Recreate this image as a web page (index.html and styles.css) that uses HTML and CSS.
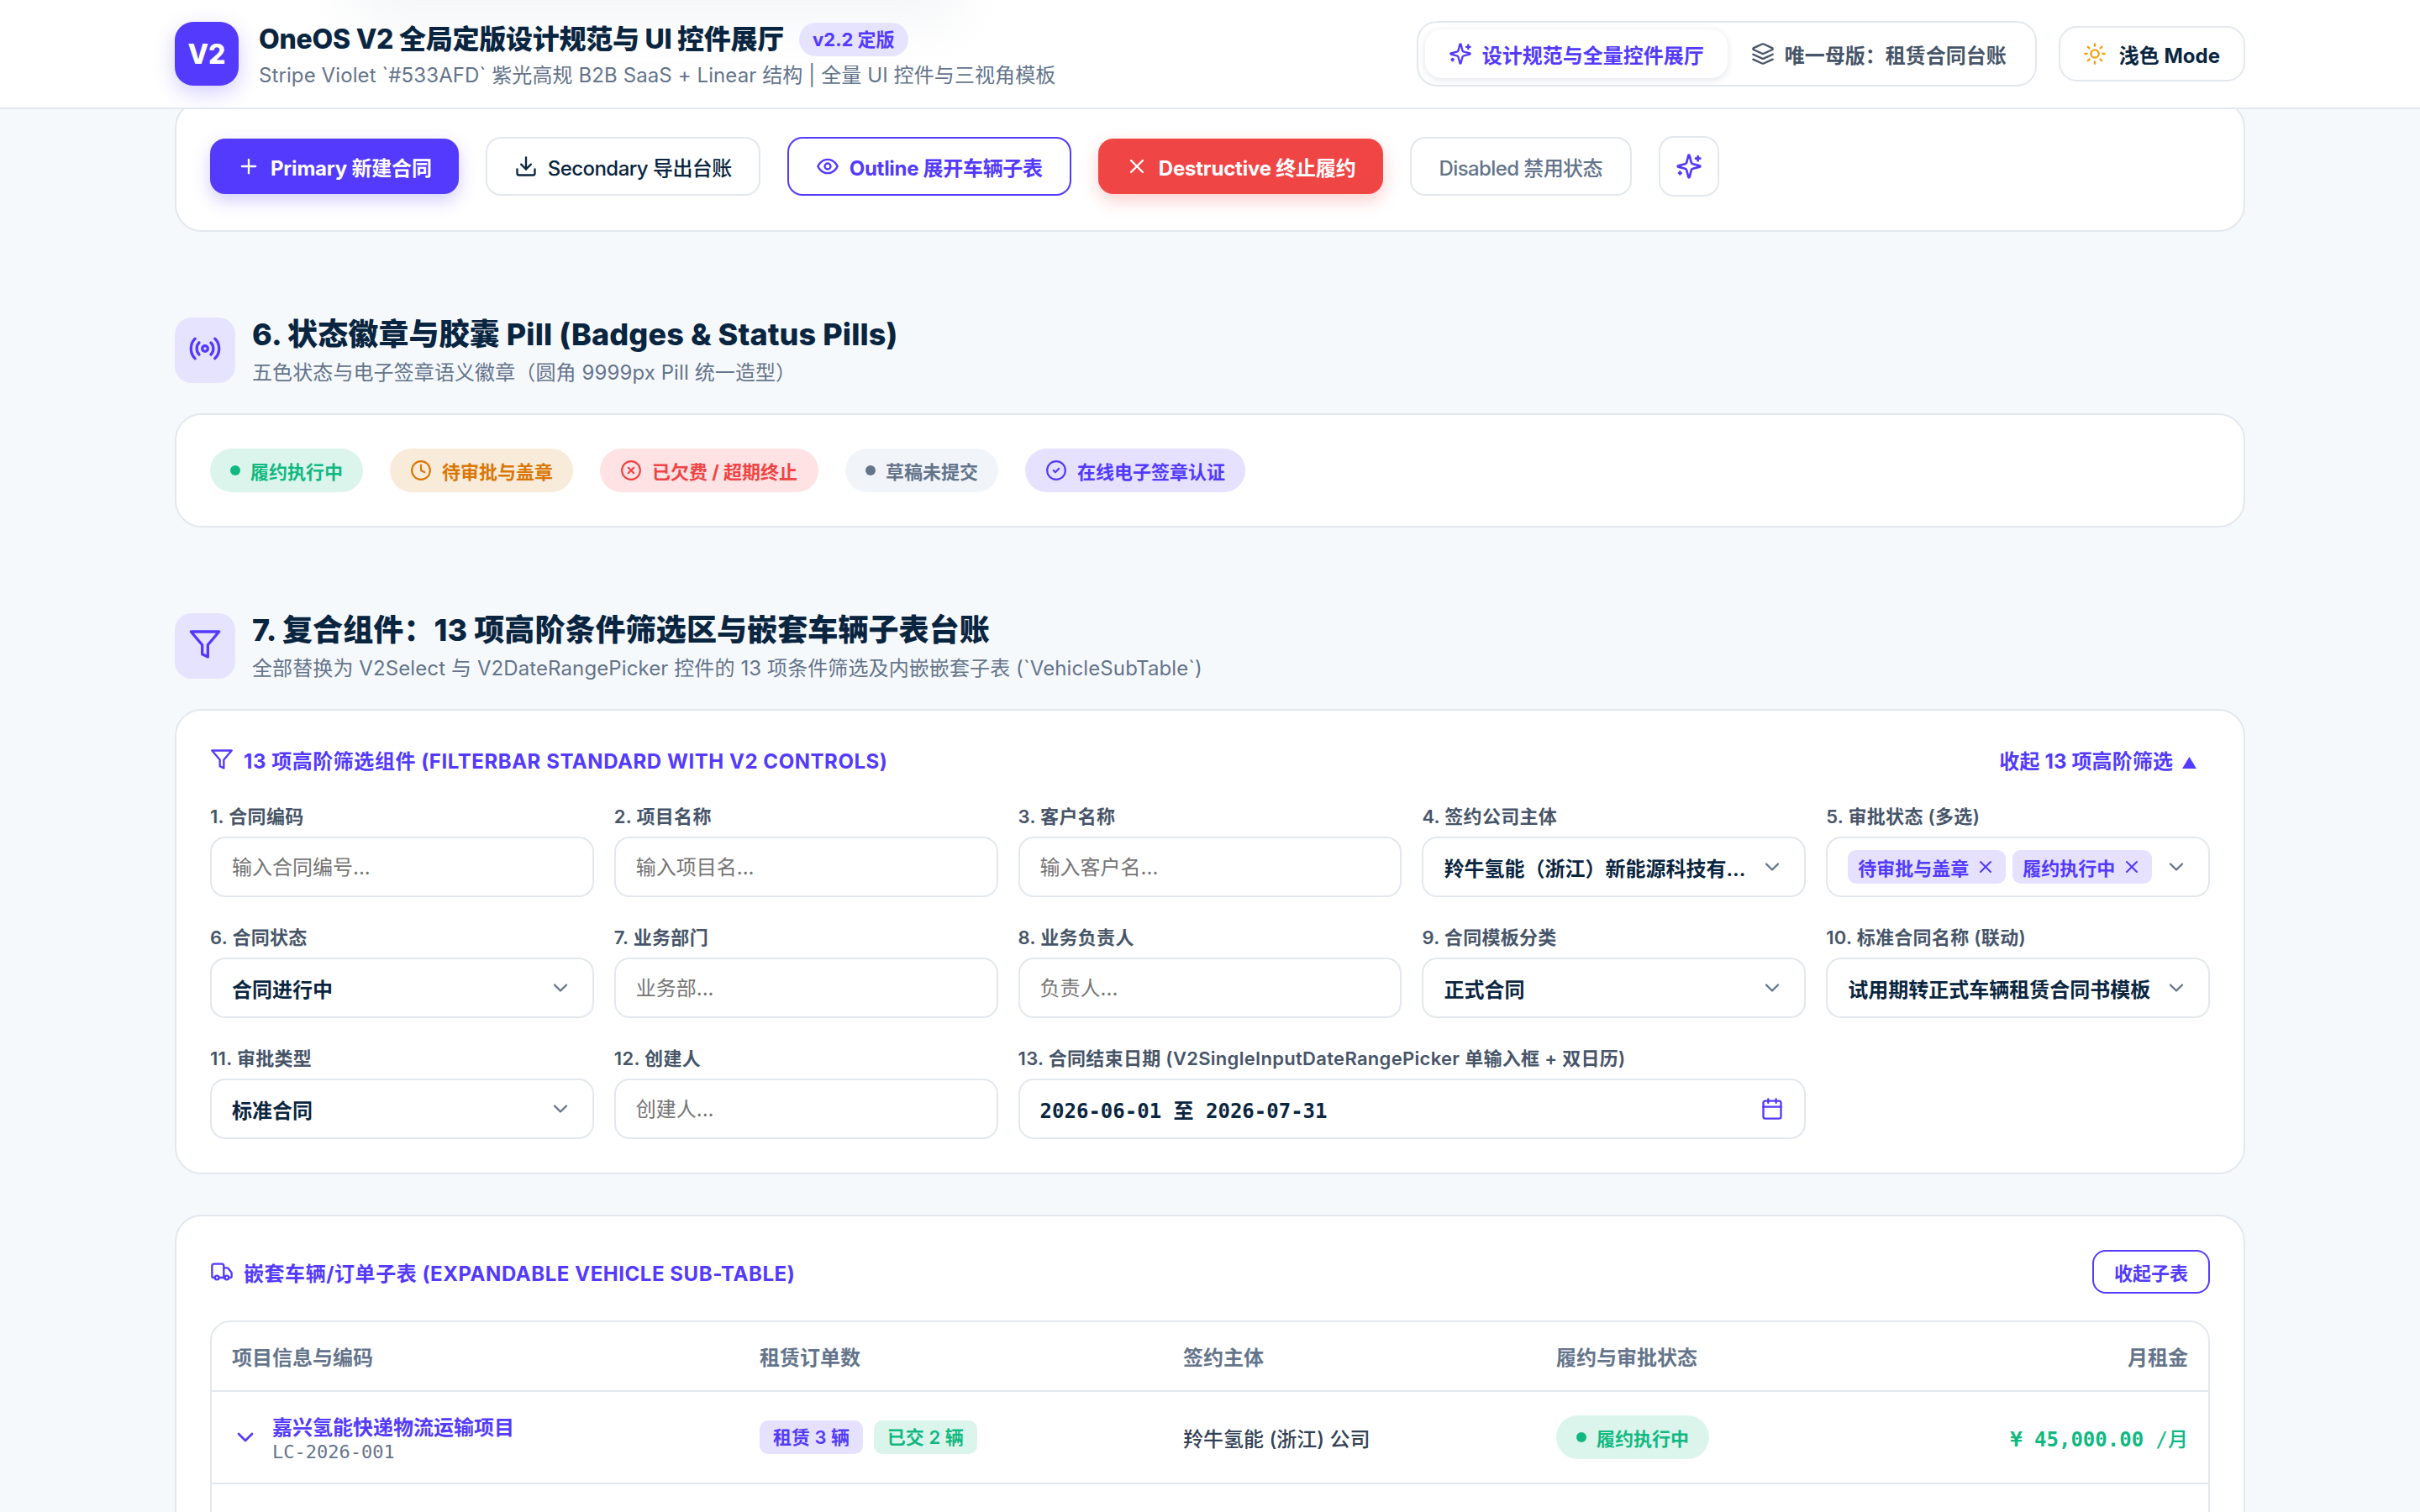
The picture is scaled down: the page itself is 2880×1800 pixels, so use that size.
FILE: index.html
```html
<!DOCTYPE html>
<html lang="zh-CN">
<head>
    <meta charset="UTF-8">
    <meta name="viewport" content="width=device-width, initial-scale=1.0">
    <title>OneOS V2 全局定版设计规范与 UI 控件展厅</title>
    <link rel="stylesheet" href="styles.css">
</head>
<body>
    <!-- Lucide style icon set, reused through <use> -->
    <svg class="icon-defs" xmlns="http://www.w3.org/2000/svg">
        <symbol id="i-sparkles" viewBox="0 0 24 24"><path d="M9.937 15.5A2 2 0 0 0 8.5 14.063l-6.135-1.582a.5.5 0 0 1 0-.962L8.5 9.936A2 2 0 0 0 9.937 8.5l1.582-6.135a.5.5 0 0 1 .963 0L14.063 8.5A2 2 0 0 0 15.5 9.937l6.135 1.581a.5.5 0 0 1 0 .964L15.5 14.063a2 2 0 0 0-1.437 1.437l-1.582 6.135a.5.5 0 0 1-.963 0z"/><path d="M20 3v4"/><path d="M22 5h-4"/><path d="M4 17v2"/><path d="M5 18H3"/></symbol>
        <symbol id="i-layers" viewBox="0 0 24 24"><path d="m12.83 2.18a2 2 0 0 0-1.66 0L2.6 6.08a1 1 0 0 0 0 1.83l8.58 3.91a2 2 0 0 0 1.66 0l8.58-3.9a1 1 0 0 0 0-1.83Z"/><path d="m22 17.65-9.17 4.16a2 2 0 0 1-1.66 0L2 17.65"/><path d="m22 12.65-9.17 4.16a2 2 0 0 1-1.66 0L2 12.65"/></symbol>
        <symbol id="i-sun" viewBox="0 0 24 24"><circle cx="12" cy="12" r="4"/><path d="M12 2v2"/><path d="M12 20v2"/><path d="m4.93 4.93 1.41 1.41"/><path d="m17.66 17.66 1.41 1.41"/><path d="M2 12h2"/><path d="M20 12h2"/><path d="m6.34 17.66-1.41 1.41"/><path d="m19.07 4.93-1.41 1.41"/></symbol>
        <symbol id="i-plus" viewBox="0 0 24 24"><path d="M5 12h14"/><path d="M12 5v14"/></symbol>
        <symbol id="i-download" viewBox="0 0 24 24"><path d="M21 15v4a2 2 0 0 1-2 2H5a2 2 0 0 1-2-2v-4"/><polyline points="7 10 12 15 17 10"/><line x1="12" y1="15" x2="12" y2="3"/></symbol>
        <symbol id="i-eye" viewBox="0 0 24 24"><path d="M2 12s3-7 10-7 10 7 10 7-3 7-10 7-10-7-10-7Z"/><circle cx="12" cy="12" r="3"/></symbol>
        <symbol id="i-x" viewBox="0 0 24 24"><path d="M18 6 6 18"/><path d="m6 6 12 12"/></symbol>
        <symbol id="i-radio" viewBox="0 0 24 24"><path d="M4.9 19.1C1 15.2 1 8.8 4.9 4.9"/><path d="M7.8 16.2c-2.3-2.3-2.3-6.1 0-8.5"/><circle cx="12" cy="12" r="2"/><path d="M16.2 7.8c2.3 2.3 2.3 6.1 0 8.5"/><path d="M19.1 4.9C23 8.8 23 15.1 19.1 19"/></symbol>
        <symbol id="i-clock" viewBox="0 0 24 24"><circle cx="12" cy="12" r="10"/><polyline points="12 6 12 12 16 14"/></symbol>
        <symbol id="i-circle-x" viewBox="0 0 24 24"><circle cx="12" cy="12" r="10"/><path d="m15 9-6 6"/><path d="m9 9 6 6"/></symbol>
        <symbol id="i-circle-check" viewBox="0 0 24 24"><circle cx="12" cy="12" r="10"/><path d="m9 12 2 2 4-4"/></symbol>
        <symbol id="i-filter" viewBox="0 0 24 24"><polygon points="22 3 2 3 10 12.46 10 19 14 21 14 12.46 22 3"/></symbol>
        <symbol id="i-chevron" viewBox="0 0 24 24"><path d="m6 9 6 6 6-6"/></symbol>
        <symbol id="i-calendar" viewBox="0 0 24 24"><rect x="3" y="4" width="18" height="18" rx="2"/><line x1="16" y1="2" x2="16" y2="6"/><line x1="8" y1="2" x2="8" y2="6"/><line x1="3" y1="10" x2="21" y2="10"/></symbol>
        <symbol id="i-truck" viewBox="0 0 24 24"><path d="M14 18V6a2 2 0 0 0-2-2H4a2 2 0 0 0-2 2v11a1 1 0 0 0 1 1h2"/><path d="M15 18H9"/><path d="M19 18h2a1 1 0 0 0 1-1v-3.65a1 1 0 0 0-.22-.624l-3.48-4.35A1 1 0 0 0 17.52 8H14"/><circle cx="17" cy="18" r="2"/><circle cx="7" cy="18" r="2"/></symbol>
    </svg>

    <header class="topbar">
        <div class="topbar-haze"></div>
        <div class="topbar-inner">
            <div class="brand">
                <div class="brand-logo">V2</div>
                <div class="brand-text">
                    <div class="brand-title-row">
                        <h1 class="brand-title">OneOS V2 全局定版设计规范与 UI 控件展厅</h1>
                        <span class="brand-version">v2.2 定版</span>
                    </div>
                    <p class="brand-sub">Stripe Violet `#533AFD` 紫光高规 B2B SaaS + Linear 结构 | 全量 UI 控件与三视角模板</p>
                </div>
            </div>
            <div class="topbar-actions">
                <nav class="tabs">
                    <a class="tab tab-active"><svg class="icon"><use href="#i-sparkles"/></svg>设计规范与全量控件展厅</a>
                    <a class="tab"><svg class="icon"><use href="#i-layers"/></svg>唯一母版：租赁合同台账</a>
                </nav>
                <button class="mode-btn"><svg class="icon icon-sun"><use href="#i-sun"/></svg>浅色 Mode</button>
            </div>
        </div>
    </header>

    <main class="page">
        <section class="section section-cut">
            <div class="card button-row">
                <button class="btn btn-primary"><svg class="icon"><use href="#i-plus"/></svg>Primary 新建合同</button>
                <button class="btn btn-secondary"><svg class="icon"><use href="#i-download"/></svg>Secondary 导出台账</button>
                <button class="btn btn-outline"><svg class="icon"><use href="#i-eye"/></svg>Outline 展开车辆子表</button>
                <button class="btn btn-danger"><svg class="icon"><use href="#i-x"/></svg>Destructive 终止履约</button>
                <button class="btn btn-disabled">Disabled 禁用状态</button>
                <button class="btn btn-icon"><svg class="icon"><use href="#i-sparkles"/></svg></button>
            </div>
        </section>

        <section class="section">
            <div class="section-head">
                <div class="section-icon"><svg class="icon"><use href="#i-radio"/></svg></div>
                <div>
                    <h2 class="section-title">6. 状态徽章与胶囊 Pill (Badges &amp; Status Pills)</h2>
                    <p class="section-sub">五色状态与电子签章语义徽章（圆角 9999px Pill 统一造型）</p>
                </div>
            </div>
            <div class="card pill-row">
                <span class="pill pill-green"><i class="pill-dot"></i>履约执行中</span>
                <span class="pill pill-amber"><svg class="icon"><use href="#i-clock"/></svg>待审批与盖章</span>
                <span class="pill pill-red"><svg class="icon"><use href="#i-circle-x"/></svg>已欠费 / 超期终止</span>
                <span class="pill pill-grey"><i class="pill-dot"></i>草稿未提交</span>
                <span class="pill pill-violet"><svg class="icon"><use href="#i-circle-check"/></svg>在线电子签章认证</span>
            </div>
        </section>

        <section class="section">
            <div class="section-head">
                <div class="section-icon"><svg class="icon"><use href="#i-filter"/></svg></div>
                <div>
                    <h2 class="section-title">7. 复合组件：13 项高阶条件筛选区与嵌套车辆子表台账</h2>
                    <p class="section-sub">全部替换为 V2Select 与 V2DateRangePicker 控件的 13 项条件筛选及内嵌嵌套子表 (`VehicleSubTable`)</p>
                </div>
            </div>

            <div class="card filter-card">
                <div class="filter-head">
                    <div class="panel-title"><svg class="icon"><use href="#i-filter"/></svg>13 项高阶筛选组件 (FILTERBAR STANDARD WITH V2 CONTROLS)</div>
                    <a class="filter-toggle">收起 13 项高阶筛选 <span class="toggle-arrow">▲</span></a>
                </div>
                <div class="filter-grid">
                    <label class="field"><span class="field-label">1. 合同编码</span><input class="control" placeholder="输入合同编号..."></label>
                    <label class="field"><span class="field-label">2. 项目名称</span><input class="control" placeholder="输入项目名..."></label>
                    <label class="field"><span class="field-label">3. 客户名称</span><input class="control" placeholder="输入客户名..."></label>
                    <div class="field"><span class="field-label">4. 签约公司主体</span>
                        <div class="control control-select"><span class="select-value">羚牛氢能（浙江）新能源科技有...</span><svg class="icon chevron"><use href="#i-chevron"/></svg></div>
                    </div>
                    <div class="field"><span class="field-label">5. 审批状态 (多选)</span>
                        <div class="control control-select control-tags">
                            <div class="tag-list">
                                <span class="tag">待审批与盖章<svg class="icon"><use href="#i-x"/></svg></span>
                                <span class="tag">履约执行中<svg class="icon"><use href="#i-x"/></svg></span>
                            </div>
                            <svg class="icon chevron"><use href="#i-chevron"/></svg>
                        </div>
                    </div>

                    <div class="field"><span class="field-label">6. 合同状态</span>
                        <div class="control control-select"><span class="select-value">合同进行中</span><svg class="icon chevron"><use href="#i-chevron"/></svg></div>
                    </div>
                    <label class="field"><span class="field-label">7. 业务部门</span><input class="control" placeholder="业务部..."></label>
                    <label class="field"><span class="field-label">8. 业务负责人</span><input class="control" placeholder="负责人..."></label>
                    <div class="field"><span class="field-label">9. 合同模板分类</span>
                        <div class="control control-select"><span class="select-value">正式合同</span><svg class="icon chevron"><use href="#i-chevron"/></svg></div>
                    </div>
                    <div class="field"><span class="field-label">10. 标准合同名称 (联动)</span>
                        <div class="control control-select"><span class="select-value">试用期转正式车辆租赁合同书模板</span><svg class="icon chevron"><use href="#i-chevron"/></svg></div>
                    </div>

                    <div class="field"><span class="field-label">11. 审批类型</span>
                        <div class="control control-select"><span class="select-value">标准合同</span><svg class="icon chevron"><use href="#i-chevron"/></svg></div>
                    </div>
                    <label class="field"><span class="field-label">12. 创建人</span><input class="control" placeholder="创建人..."></label>
                    <div class="field field-wide"><span class="field-label">13. 合同结束日期 (V2SingleInputDateRangePicker 单输入框 + 双日历)</span>
                        <div class="control control-select"><span class="date-value">2026-06-01 至 2026-07-31</span><svg class="icon calendar"><use href="#i-calendar"/></svg></div>
                    </div>
                </div>
            </div>

            <div class="card vehicle-card">
                <div class="vehicle-head">
                    <div class="panel-title"><svg class="icon"><use href="#i-truck"/></svg>嵌套车辆/订单子表 (EXPANDABLE VEHICLE SUB-TABLE)</div>
                    <button class="btn-small">收起子表</button>
                </div>
                <div class="table-wrap">
                    <table class="vehicle-table">
                        <colgroup>
                            <col class="col-project"><col class="col-orders"><col class="col-entity"><col class="col-status"><col>
                        </colgroup>
                        <thead>
                            <tr>
                                <th>项目信息与编码</th>
                                <th>租赁订单数</th>
                                <th>签约主体</th>
                                <th>履约与审批状态</th>
                                <th class="align-right">月租金</th>
                            </tr>
                        </thead>
                        <tbody>
                            <tr>
                                <td>
                                    <div class="project-cell">
                                        <svg class="icon chevron-row"><use href="#i-chevron"/></svg>
                                        <div>
                                            <div class="project-name">嘉兴氢能快递物流运输项目</div>
                                            <div class="project-code">LC-2026-001</div>
                                        </div>
                                    </div>
                                </td>
                                <td>
                                    <span class="count count-violet">租赁 3 辆</span>
                                    <span class="count count-green">已交 2 辆</span>
                                </td>
                                <td class="entity-cell">羚牛氢能 (浙江) 公司</td>
                                <td><span class="pill pill-green"><i class="pill-dot"></i>履约执行中</span></td>
                                <td class="align-right rent-cell">¥ 45,000.00 <span class="rent-unit">/月</span></td>
                            </tr>
                            <tr class="row-next"><td></td><td></td><td></td><td></td><td></td></tr>
                        </tbody>
                    </table>
                </div>
            </div>
        </section>
    </main>
</body>
</html>
```

FILE: styles.css
```css
* {
    box-sizing: border-box;
}

html, body {
    height: 1800px;
    margin: 0;
    overflow: hidden;
}

body {
    font-family: Inter, "Noto Sans CJK SC", sans-serif;
    background-color: #f6f9fc;
    color: #0a2540;
    font-size: 24px;
}

h1, h2, p {
    margin: 0;
}

button {
    font-family: inherit;
}

.icon-defs {
    display: none;
}

.icon {
    width: 28px;
    height: 28px;
    flex: none;
    fill: none;
    stroke: currentColor;
    stroke-width: 2;
    stroke-linecap: round;
    stroke-linejoin: round;
}

/* Top bar */
.topbar {
    position: relative;
    z-index: 10;
    height: 130px;
    background-color: #fff;
    border-bottom: 2px solid #e3e8ee;
    overflow: hidden;
}

.topbar-haze {
    position: absolute;
    left: 420px;
    top: -60px;
    width: 720px;
    height: 90px;
    background-color: #eef0f3;
    filter: blur(30px);
    opacity: 0.6;
}

.topbar-inner {
    position: relative;
    width: 2464px;
    height: 128px;
    margin: 0 auto;
    display: flex;
    align-items: center;
    justify-content: space-between;
}

.brand {
    display: flex;
    align-items: center;
    gap: 24px;
}

.brand-logo {
    width: 76px;
    height: 76px;
    border-radius: 22px;
    background-color: #533afd;
    color: #fff;
    font-size: 32px;
    font-weight: 800;
    display: flex;
    align-items: center;
    justify-content: center;
    box-shadow: 0 8px 24px rgba(83, 58, 253, 0.25);
}

.brand-text {
    padding-top: 4px;
}

.brand-title-row {
    display: flex;
    align-items: center;
    gap: 18px;
    height: 40px;
}

.brand-title {
    font-size: 32px;
    font-weight: 800;
    line-height: 40px;
    letter-spacing: -0.25px;
}

.brand-version {
    height: 40px;
    line-height: 40px;
    padding: 0 16px;
    border-radius: 20px;
    background-color: #e5e3ff;
    color: #533afd;
    font-size: 22px;
    font-weight: 700;
}

.brand-sub {
    margin-top: 8px;
    font-size: 24px;
    line-height: 30px;
    letter-spacing: 0.1px;
    color: #64748b;
}

.topbar-actions {
    display: flex;
    align-items: center;
    gap: 26px;
}

.tabs {
    display: flex;
    align-items: center;
    height: 78px;
    padding: 0 6px 0 8px;
    border: 2px solid #e3e8ee;
    border-radius: 24px;
}

.tab {
    display: flex;
    align-items: center;
    gap: 12px;
    height: 58px;
    padding: 0 28px;
    border-radius: 20px;
    color: #475569;
    font-size: 24px;
    font-weight: 600;
}

.tab-active {
    background-color: #fff;
    color: #533afd;
    box-shadow: 0 2px 8px rgba(10, 37, 64, 0.12);
}

.mode-btn {
    display: flex;
    align-items: center;
    gap: 15px;
    height: 66px;
    padding: 0 28px 0 27px;
    background-color: #fff;
    border: 2px solid #e3e8ee;
    border-radius: 22px;
    color: #0a2540;
    font-size: 24px;
    font-weight: 700;
}

.icon-sun {
    color: #f59e0b;
}

/* Page sections */
.page {
    width: 2464px;
    margin: 0 auto;
}

.section {
    margin-top: 102px;
}

.section-cut {
    margin-top: -10px;
}

.section-head {
    display: flex;
    gap: 20px;
    height: 78px;
    margin-bottom: 36px;
}

.section-icon {
    width: 72px;
    padding-bottom: 5px;
    border-radius: 20px;
    background-color: #e5e3ff;
    color: #533afd;
    display: flex;
    align-items: center;
    justify-content: center;
}

.section-icon .icon {
    width: 40px;
    height: 40px;
}

.section-title {
    font-size: 36px;
    font-weight: 800;
    line-height: 40px;
    letter-spacing: 0.1px;
}

.section-sub {
    margin-top: 12px;
    font-size: 24px;
    line-height: 28px;
    letter-spacing: 0.1px;
    color: #64748b;
}

.card {
    background-color: #fff;
    border: 2px solid #e3e8ee;
    border-radius: 32px;
    padding: 40px;
}

/* Buttons */
.button-row {
    display: flex;
    align-items: center;
    gap: 32px;
    height: 156px;
}

.btn {
    display: flex;
    align-items: center;
    gap: 12px;
    height: 66px;
    padding: 0 32px;
    border: none;
    border-radius: 18px;
    font-size: 24px;
    font-weight: 700;
    letter-spacing: -0.2px;
    background-color: #fff;
}

.btn-primary {
    background-color: #533afd;
    color: #fff;
    box-shadow: 0 8px 20px rgba(83, 58, 253, 0.25);
}

.btn-secondary {
    height: 70px;
    border: 2px solid #e3e8ee;
    color: #0a2540;
    font-weight: 500;
    letter-spacing: -0.55px;
}

.btn-outline {
    height: 70px;
    border: 2px solid #533afd;
    color: #533afd;
    letter-spacing: -0.3px;
}

.btn-danger {
    background-color: #f04545;
    color: #fff;
    box-shadow: 0 8px 20px rgba(240, 69, 69, 0.25);
}

.btn-disabled {
    height: 70px;
    padding: 0 33px;
    border: 2px solid #e3e8ee;
    color: #64748b;
    font-weight: 500;
    letter-spacing: -0.6px;
}

.btn-icon {
    width: 72px;
    height: 72px;
    padding: 0;
    justify-content: center;
    border: 2px solid #e3e8ee;
    color: #533afd;
}

.btn-icon .icon {
    width: 32px;
    height: 32px;
}

/* Pills */
.pill-row {
    display: flex;
    gap: 32px;
}

.pill {
    display: inline-flex;
    align-items: center;
    gap: 12px;
    height: 52px;
    padding: 0 24px;
    border-radius: 26px;
    font-size: 22px;
    font-weight: 700;
}

.pill .icon {
    width: 26px;
    height: 26px;
}

.pill-dot {
    width: 12px;
    height: 12px;
    border-radius: 50%;
    background-color: currentColor;
}

.pill-green {
    background-color: #dcf5ec;
    color: #10b981;
}

.pill-amber {
    background-color: #f9ebd9;
    color: #d97706;
}

.pill-red {
    padding: 0 25px 0 24px;
    background-color: #ffe2e4;
    color: #ef4444;
}

.pill-grey {
    background-color: #f1f5f9;
    color: #64748b;
}

.pill-violet {
    background-color: #e5e1ff;
    color: #533afd;
}

/* Filter panel */
.filter-head {
    display: flex;
    align-items: center;
    justify-content: space-between;
    height: 36px;
    margin-bottom: 34px;
}

.panel-title {
    display: flex;
    align-items: center;
    gap: 12px;
    color: #533afd;
    font-size: 24px;
    font-weight: 700;
    letter-spacing: 0.55px;
}

.filter-toggle {
    margin-right: 15px;
    color: #533afd;
    font-size: 24px;
    font-weight: 700;
    letter-spacing: 0.15px;
}

.toggle-arrow {
    margin-left: 4px;
    font-size: 18px;
}

.filter-grid {
    display: grid;
    grid-template-columns: repeat(5, 1fr);
    column-gap: 24px;
    row-gap: 32px;
}

.field {
    display: block;
    min-width: 0;
}

.field-wide {
    grid-column: span 2;
}

.field-label {
    display: block;
    height: 32px;
    margin-bottom: 8px;
    color: #475569;
    font-size: 22px;
    font-weight: 600;
    line-height: 32px;
    letter-spacing: 0.3px;
}

.control {
    display: block;
    width: 100%;
    height: 72px;
    padding: 0 24px;
    background-color: #fff;
    border: 2px solid #e3e8ee;
    border-radius: 18px;
    font-family: inherit;
    font-size: 24px;
    color: #0a2540;
}

.control-select {
    display: flex;
    align-items: center;
    justify-content: space-between;
    gap: 12px;
}

.select-value {
    min-width: 0;
    white-space: nowrap;
    font-weight: 600;
}

.date-value {
    font-family: "DejaVu Sans Mono", "Noto Sans CJK SC", monospace;
    font-weight: 700;
}

.chevron {
    color: #64748b;
}

.calendar {
    color: #533afd;
}

.tag-list {
    display: flex;
    gap: 8px;
    min-width: 0;
}

.tag {
    display: flex;
    align-items: center;
    gap: 8px;
    height: 40px;
    padding: 0 12px;
    border-radius: 10px;
    background-color: #e5e1ff;
    color: #533afd;
    font-size: 22px;
    font-weight: 600;
    white-space: nowrap;
}

.tag .icon {
    width: 24px;
    height: 24px;
}

/* Vehicle sub table */
.vehicle-card {
    margin-top: 48px;
}

.vehicle-head {
    display: flex;
    align-items: center;
    justify-content: space-between;
    height: 52px;
    margin-bottom: 32px;
}

.btn-small {
    height: 52px;
    padding: 0 24px;
    background-color: #fff;
    border: 2px solid #533afd;
    border-radius: 16px;
    color: #533afd;
    font-size: 22px;
    font-weight: 600;
}

.table-wrap {
    border: 2px solid #e3e8ee;
    border-radius: 24px;
    overflow: hidden;
}

.vehicle-table {
    width: 100%;
    table-layout: fixed;
    border-collapse: collapse;
}

.col-project {
    width: 628px;
}

.col-orders {
    width: 504px;
}

.col-entity {
    width: 444px;
}

.col-status {
    width: 440px;
}

.vehicle-table th {
    height: 82px;
    padding: 0 24px;
    border-bottom: 2px solid #e3e8ee;
    color: #64748b;
    font-size: 24px;
    font-weight: 600;
    text-align: left;
}

.vehicle-table td {
    height: 110px;
    padding: 0 24px;
    border-bottom: 2px solid #e3e8ee;
}

.vehicle-table .align-right {
    text-align: right;
}

.project-cell {
    display: flex;
    align-items: center;
    gap: 16px;
}

.chevron-row {
    width: 32px;
    height: 32px;
    color: #533afd;
}

.project-name {
    margin-top: 3px;
    color: #533afd;
    font-weight: 600;
    line-height: 32px;
}

.project-code {
    color: #64748b;
    font-family: "DejaVu Sans Mono", monospace;
    font-size: 22px;
    line-height: 26px;
}

.count {
    display: inline-block;
    height: 40px;
    line-height: 40px;
    padding: 0 16px;
    margin-right: 6px;
    border-radius: 10px;
    font-size: 22px;
    font-weight: 600;
}

.count-violet {
    background-color: #e5e1ff;
    color: #533afd;
}

.count-green {
    background-color: #dcf5ec;
    color: #10b981;
}

.entity-cell {
    color: #334155;
    font-weight: 500;
}

.rent-cell {
    color: #10b981;
    font-family: "DejaVu Sans Mono", "Noto Sans CJK SC", monospace;
    font-weight: 700;
}

.rent-unit {
    font-weight: 500;
}
```
